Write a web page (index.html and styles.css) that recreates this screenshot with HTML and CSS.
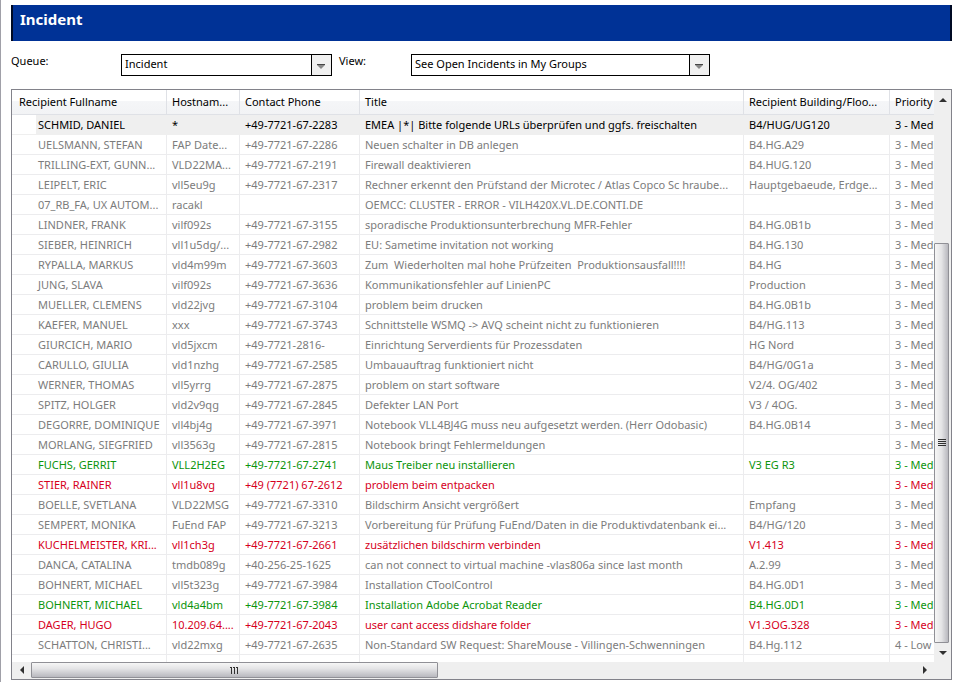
FILE: index.html
```html
<!DOCTYPE html>
<html lang="en">
<head>
<meta charset="utf-8">
<title>Incident</title>
<link rel="stylesheet" href="styles.css">
</head>
<body>
<main class="page">
<h1 class="banner">Incident</h1>
<form class="filters">
<label class="queue-label" for="queue">Queue:</label>
<span class="picker queue-picker"><select id="queue"><option>Incident</option></select><svg class="caret" viewBox="0 0 20 20" aria-hidden="true"><path class="caret-back" d="M0 0h20v20H0z"/><path class="caret-rule" d="M0 0h1v20H0z"/><path class="caret-tip" d="M6 9h8v1l-4 4-4-4z"/><path class="caret-top" d="M6 9h8v1H6z"/></svg></span>
<label class="view-label" for="view">View:</label>
<span class="picker view-picker"><select id="view"><option>See Open Incidents in My Groups</option></select><svg class="caret" viewBox="0 0 20 20" aria-hidden="true"><path class="caret-back" d="M0 0h20v20H0z"/><path class="caret-rule" d="M0 0h1v20H0z"/><path class="caret-tip" d="M6 9h8v1l-4 4-4-4z"/><path class="caret-top" d="M6 9h8v1H6z"/></svg></span>
</form>
<section class="list">
<div class="viewport">
<table>
<colgroup><col class="c-name"><col class="c-host"><col class="c-phone"><col class="c-title"><col class="c-building"><col class="c-priority"></colgroup>
<thead><tr><th>Recipient Fullname</th><th>Hostnam...</th><th>Contact Phone</th><th>Title</th><th>Recipient Building/Floo...</th><th>Priority</th></tr></thead>
<tbody>
<tr class="selected"><td>SCHMID, DANIEL</td><td>*</td><td>+49-7721-67-2283</td><td>EMEA |*| Bitte folgende URLs überprüfen und ggfs. freischalten</td><td>B4/HUG/UG120</td><td>3 - Medium</td></tr>
<tr><td>UELSMANN, STEFAN</td><td>FAP Date...</td><td>+49-7721-67-2286</td><td>Neuen schalter in DB anlegen</td><td>B4.HG.A29</td><td>3 - Medium</td></tr>
<tr><td>TRILLING-EXT, GUNN...</td><td>VLD22MA...</td><td>+49-7721-67-2191</td><td>Firewall deaktivieren</td><td>B4.HUG.120</td><td>3 - Medium</td></tr>
<tr><td>LEIPELT, ERIC</td><td>vll5eu9g</td><td>+49-7721-67-2317</td><td>Rechner erkennt den Prüfstand der Microtec / Atlas Copco Sc hraube...</td><td>Hauptgebaeude, Erdge...</td><td>3 - Medium</td></tr>
<tr><td>07_RB_FA, UX AUTOM...</td><td>racakl</td><td></td><td>OEMCC: CLUSTER - ERROR - VILH420X.VL.DE.CONTI.DE</td><td></td><td>3 - Medium</td></tr>
<tr><td>LINDNER, FRANK</td><td>vilf092s</td><td>+49-7721-67-3155</td><td>sporadische Produktionsunterbrechung MFR-Fehler</td><td>B4.HG.0B1b</td><td>3 - Medium</td></tr>
<tr><td>SIEBER, HEINRICH</td><td>vll1u5dg/...</td><td>+49-7721-67-2982</td><td>EU: Sametime invitation not working</td><td>B4.HG.130</td><td>3 - Medium</td></tr>
<tr><td>RYPALLA, MARKUS</td><td>vld4m99m</td><td>+49-7721-67-3603</td><td>Zum  Wiederholten mal hohe Prüfzeiten  Produktionsausfall!!!!</td><td>B4.HG</td><td>3 - Medium</td></tr>
<tr><td>JUNG, SLAVA</td><td>vilf092s</td><td>+49-7721-67-3636</td><td>Kommunikationsfehler auf LinienPC</td><td>Production</td><td>3 - Medium</td></tr>
<tr><td>MUELLER, CLEMENS</td><td>vld22jvg</td><td>+49-7721-67-3104</td><td>problem beim drucken</td><td>B4.HG.0B1b</td><td>3 - Medium</td></tr>
<tr><td>KAEFER, MANUEL</td><td>xxx</td><td>+49-7721-67-3743</td><td>Schnittstelle WSMQ -&gt; AVQ scheint nicht zu funktionieren</td><td>B4/HG.113</td><td>3 - Medium</td></tr>
<tr><td>GIURCICH, MARIO</td><td>vld5jxcm</td><td>+49-7721-2816-</td><td>Einrichtung Serverdients für Prozessdaten</td><td>HG Nord</td><td>3 - Medium</td></tr>
<tr><td>CARULLO, GIULIA</td><td>vld1nzhg</td><td>+49-7721-67-2585</td><td>Umbauauftrag funktioniert nicht</td><td>B4/HG/0G1a</td><td>3 - Medium</td></tr>
<tr><td>WERNER, THOMAS</td><td>vll5yrrg</td><td>+49-7721-67-2875</td><td>problem on start software</td><td>V2/4. OG/402</td><td>3 - Medium</td></tr>
<tr><td>SPITZ, HOLGER</td><td>vld2v9qg</td><td>+49-7721-67-2845</td><td>Defekter LAN Port</td><td>V3 / 4OG.</td><td>3 - Medium</td></tr>
<tr><td>DEGORRE, DOMINIQUE</td><td>vll4bj4g</td><td>+49-7721-67-3971</td><td>Notebook VLL4BJ4G muss neu aufgesetzt werden. (Herr Odobasic)</td><td>B4.HG.0B14</td><td>3 - Medium</td></tr>
<tr><td>MORLANG, SIEGFRIED</td><td>vll3563g</td><td>+49-7721-67-2815</td><td>Notebook bringt Fehlermeldungen</td><td></td><td>3 - Medium</td></tr>
<tr class="green"><td>FUCHS, GERRIT</td><td>VLL2H2EG</td><td>+49-7721-67-2741</td><td>Maus Treiber neu installieren</td><td>V3 EG R3</td><td>3 - Medium</td></tr>
<tr class="red"><td>STIER, RAINER</td><td>vll1u8vg</td><td>+49 (7721) 67-2612</td><td>problem beim entpacken</td><td></td><td>3 - Medium</td></tr>
<tr><td>BOELLE, SVETLANA</td><td>VLD22MSG</td><td>+49-7721-67-3310</td><td>Bildschirm Ansicht vergrößert</td><td>Empfang</td><td>3 - Medium</td></tr>
<tr><td>SEMPERT, MONIKA</td><td>FuEnd FAP</td><td>+49-7721-67-3213</td><td>Vorbereitung für Prüfung FuEnd/Daten in die Produktivdatenbank ei...</td><td>B4/HG/120</td><td>3 - Medium</td></tr>
<tr class="red"><td>KUCHELMEISTER, KRI...</td><td>vll1ch3g</td><td>+49-7721-67-2661</td><td>zusätzlichen bildschirm verbinden</td><td>V1.413</td><td>3 - Medium</td></tr>
<tr><td>DANCA, CATALINA</td><td>tmdb089g</td><td>+40-256-25-1625</td><td>can not connect to virtual machine -vlas806a since last month</td><td>A.2.99</td><td>3 - Medium</td></tr>
<tr><td>BOHNERT, MICHAEL</td><td>vll5t323g</td><td>+49-7721-67-3984</td><td>Installation CToolControl</td><td>B4.HG.0D1</td><td>3 - Medium</td></tr>
<tr class="green"><td>BOHNERT, MICHAEL</td><td>vld4a4bm</td><td>+49-7721-67-3984</td><td>Installation Adobe Acrobat Reader</td><td>B4.HG.0D1</td><td>3 - Medium</td></tr>
<tr class="red"><td>DAGER, HUGO</td><td>10.209.64....</td><td>+49-7721-67-2043</td><td>user cant access didshare folder</td><td>V1.3OG.328</td><td>3 - Medium</td></tr>
<tr><td>SCHATTON, CHRISTI...</td><td>vld22mxg</td><td>+49-7721-67-2635</td><td>Non-Standard SW Request: ShareMouse - Villingen-Schwenningen</td><td>B4.Hg.112</td><td>4 - Low</td></tr>
</tbody>
<tfoot aria-hidden="true"><tr><td></td><td></td><td></td><td></td><td></td><td></td></tr></tfoot>
</table>
</div>
<div class="vbar">
<button type="button" aria-label="Scroll up"><svg width="8" height="4" viewBox="0 0 8 4"><path d="M4 0l4 4H0z"/></svg></button>
<div class="vtrack"><div class="vthumb"><svg width="8" height="8" viewBox="0 0 8 8"><path d="M0 0h8v1H0zM0 2h8v1H0zM0 4h8v1H0zM0 6h8v1H0z"/></svg></div></div>
<button type="button" aria-label="Scroll down"><svg width="8" height="4" viewBox="0 0 8 4"><path d="M0 0h8L4 4z"/></svg></button>
</div>
<div class="hbar">
<button type="button" aria-label="Scroll left"><svg width="4" height="8" viewBox="0 0 4 8"><path d="M4 0v8L0 4z"/></svg></button>
<div class="htrack"><div class="hthumb"><svg width="8" height="7" viewBox="0 0 8 7"><path d="M0 0h2v1H0zM1 0h1v7H1zM3 0h2v1H3zM4 0h1v7H4zM6 0h2v1H6zM7 0h1v7H7z"/></svg></div></div>
<button type="button" aria-label="Scroll right"><svg width="4" height="8" viewBox="0 0 4 8"><path d="M0 0l4 4-4 4z"/></svg></button>
</div>
<div class="corner"></div>
</section>
</main>
</body>
</html>
```
FILE: styles.css
```css
* { box-sizing: border-box; }
body {
  margin: 0;
  background: #fff;
  color: #000;
  font: 11px/14px "Noto Sans", sans-serif;
}
.page {
  min-height: 100vh;
  padding: 5px 9px 2px 10px;
  border-left: 1px solid #a0a0a8;
}
.banner {
  height: 36px;
  margin: 0;
  padding: 4px 7px;
  border: solid #000a24;
  border-width: 0 2px;
  background: #003296;
  color: #fff;
  font-size: 15px;
  line-height: 20px;
}
.filters {
  display: flex;
  align-items: flex-start;
  height: 48px;
  padding-top: 13px;
}
.queue-label { width: 110px; }
.view-label { width: 72px; margin-left: 7px; }
.picker {
  position: relative;
  height: 22px;
  border: 1px solid #000;
}
.queue-picker { width: 211px; }
.view-picker { width: 299px; }
.picker select {
  appearance: none;
  display: block;
  width: 100%;
  height: 20px;
  margin: 0;
  padding: 0 20px 2px 3px;
  border: 0;
  background: #fff;
  color: #000;
  font: inherit;
}
.caret {
  position: absolute;
  top: 0;
  right: 0;
  width: 20px;
  height: 20px;
  pointer-events: none;
}
.caret-back { fill: #f0f0f0; }
.caret-rule { fill: #000; }
.caret-tip { fill: #888; }
.caret-top { fill: #444; }
.list {
  display: grid;
  grid-template-columns: minmax(0, 1fr) 17px;
  grid-template-rows: auto 17px;
  border: 1px solid #82828a;
}
.viewport { overflow: hidden; }
table {
  width: 100%;
  table-layout: fixed;
  border-collapse: separate;
  border-spacing: 0;
  color: #7c7c7c;
}
.c-name { width: 154px; }
.c-host { width: 73px; }
.c-phone { width: 120px; }
.c-building { width: 146px; }
.c-priority { width: 45px; }
th, td {
  height: 20px;
  padding: 0 0 0 5px;
  border: solid #ececee;
  border-width: 0 0 1px 1px;
  overflow: hidden;
  text-align: left;
  font-weight: 400;
  white-space: pre;
}
th {
  height: 25px;
  border-color: #dfe1e6;
  background: linear-gradient(#fff 45%, #f5f6f8 45%, #f2f3f5);
  color: #000;
}
th:first-child { padding-left: 7px; border-left: 0; }
td:first-child { padding-left: 26px; border-left: 0; }
.selected td {
  border-color: #efefef;
  background: #efefef;
  color: #000;
}
.selected td:first-child { background: linear-gradient(to right, #fff 24px, #efefef 24px); }
.green { color: #0c940c; }
.red { color: #d6001c; }
tfoot td { height: 7px; border-bottom: 0; }
.vbar, .hbar, .corner { background: #efefef; }
.vbar, .vtrack, .vthumb { display: flex; flex-direction: column; }
.hbar, .htrack { display: flex; }
.vbar button, .hbar button {
  display: flex;
  align-items: center;
  justify-content: center;
  flex: none;
  padding: 0;
  border: 0;
  background: none;
}
.vbar button { height: 19px; }
.hbar button { width: 19px; height: 16px; }
.vtrack, .htrack { flex: 1; }
.vthumb, .hthumb {
  display: flex;
  align-items: center;
  justify-content: center;
  border: 1px solid #909096;
  border-radius: 1px;
}
.vthumb {
  width: 15px;
  height: 75%;
  margin-top: auto;
  background: linear-gradient(to right, #f6f6f6, #e4e4e6 50%, #b8b8be);
}
.hthumb {
  width: 46%;
  height: 16px;
  background: linear-gradient(#f6f6f6, #e4e4e6 40%, #b8b8be);
}
svg { display: block; fill: #303030; }
```
